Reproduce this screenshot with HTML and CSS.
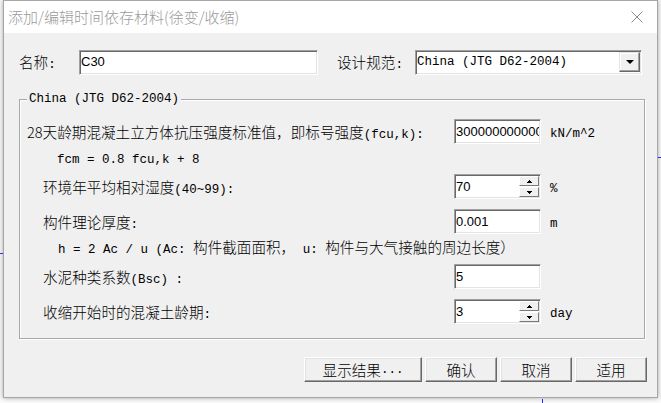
FILE: index.html
```html
<!DOCTYPE html>
<html lang="zh-CN">
<head>
<meta charset="utf-8">
<title>添加/编辑时间依存材料(徐变/收缩)</title>
<link rel="stylesheet" href="styles.css">
</head>
<body>
<div class="bg-line bl1"></div>
<div class="bg-line bl2"></div>
<div class="bg-line bl3"></div>
<div class="window">
  <div class="titlebar">
    <span class="title">添加/编辑时间依存材料(徐变/收缩)</span>
    <svg class="close" width="12" height="12" viewBox="0 0 12 12"><path d="M0.5 0.5 L11.5 11.5 M11.5 0.5 L0.5 11.5" stroke="#8c8c8c" stroke-width="1" fill="none"/></svg>
  </div>
  <div class="client">
    <div class="toprow">
      <span class="lbl-name">名称<span class="m">:</span></span>
      <div class="field name-field"><span class="val">C30</span></div>
      <span class="lbl-code">设计规范<span class="m">:</span></span>
      <div class="field combo"><span class="m combo-text">China (JTG D62-2004)</span><span class="dd"><span class="tri-down"></span></span></div>
    </div>
    <div class="group">
      <span class="legend m">China (JTG D62-2004)</span>
      <div class="row">
        <span class="lab first">28天龄期混凝土立方体抗压强度标准值，即标号强度<span class="m">(fcu,k):</span></span>
        <div class="field"><span class="val">300000000000</span></div>
        <span class="unit m">kN/m^2</span>
      </div>
      <div class="note fcm"><span class="m">fcm = 0.8 fcu,k + 8</span></div>
      <div class="row">
        <span class="lab">环境年平均相对湿度<span class="m">(40~99):</span></span>
        <div class="field spin"><span class="val">70</span><span class="spinbtns"><span class="sbtn"><svg width="5" height="3" viewBox="0 0 5 3"><path d="M2 0h1v1h1v1h1v1H0V2h1V1h1z" fill="#000"/></svg></span><span class="sbtn"><svg width="5" height="3" viewBox="0 0 5 3"><path d="M0 0h5v1H4v1H3v1H2V2H1V1H0z" fill="#000"/></svg></span></span></div>
        <span class="unit m">%</span>
      </div>
      <div class="row gap">
        <span class="lab">构件理论厚度<span class="m">:</span></span>
        <div class="field"><span class="val">0.001</span></div>
        <span class="unit m">m</span>
      </div>
      <div class="note hnote"><span class="note-text"><span class="m">h = 2 Ac / u (Ac: </span>构件截面面积，<span class="m"> u: </span>构件与大气接触的周边长度）</span></div>
      <div class="row">
        <span class="lab">水泥种类系数<span class="m">(Bsc) :</span></span>
        <div class="field"><span class="val">5</span></div>
        <span class="unit m"></span>
      </div>
      <div class="row gap">
        <span class="lab">收缩开始时的混凝土龄期<span class="m">:</span></span>
        <div class="field spin"><span class="val">3</span><span class="spinbtns"><span class="sbtn"><svg width="5" height="3" viewBox="0 0 5 3"><path d="M2 0h1v1h1v1h1v1H0V2h1V1h1z" fill="#000"/></svg></span><span class="sbtn"><svg width="5" height="3" viewBox="0 0 5 3"><path d="M0 0h5v1H4v1H3v1H2V2H1V1H0z" fill="#000"/></svg></span></span></div>
        <span class="unit m">day</span>
      </div>
    </div>
    <div class="buttons">
      <span class="btn wide">显示结果<span class="m">...</span></span>
      <span class="btn">确认</span>
      <span class="btn">取消</span>
      <span class="btn">适用</span>
    </div>
  </div>
</div>
</body>
</html>
```
FILE: styles.css
```css
* { box-sizing: border-box; }
html, body { margin: 0; padding: 0; }
body {
  width: 661px;
  height: 403px;
  overflow: hidden;
  position: relative;
  background: #fbfbfb;
  padding-left: 3px;
  font-family: "Noto Sans CJK SC", "Liberation Sans", sans-serif;
  font-size: 14.6px;
  font-weight: 300;
  line-height: 20px;
  color: #000;
}
.m {
  font-family: "Liberation Mono", "Noto Sans CJK SC", monospace;
  font-size: 12.5px;
  font-weight: 400;
}
.bg-line { position: absolute; background: #2a2aff; z-index: 2; }
.bl1 { left: 658px; top: 157px; width: 3px; height: 1px; }
.bl2 { left: 0; top: 253px; width: 3px; height: 1px; }
.bl3 { left: 542px; top: 399px; width: 1px; height: 4px; }

.window {
  width: 655px;
  height: 398px;
  border: 1px solid #a6a6a6;
  background: #f0f0f0;
  box-shadow: 0 0 5px rgba(0, 0, 0, 0.35);
  display: flex;
  flex-direction: column;
}
.titlebar {
  height: 32px;
  flex: none;
  background: #fff;
  display: flex;
  align-items: center;
  justify-content: space-between;
  padding: 0 14px 0 4px;
}
.title { color: #9a9a9a; font-size: 15px; }
.close { display: block; }

.client { flex: 1; padding-top: 17px; }

.toprow {
  display: flex;
  align-items: center;
  height: 24px;
  padding-left: 15px;
}
.lbl-name { width: 60px; padding-top: 2px; }
.lbl-code { width: 78px; margin-left: 19px; padding-top: 2px; }
.name-field { width: 239px; height: 24px; }
.combo { width: 227px; height: 24px; padding-right: 1px; }
.combo-text { white-space: nowrap; }

.field {
  background: #fff;
  border: 1px solid;
  border-color: #a0a0a0 #fff #fff #a0a0a0;
  box-shadow: inset 1px 1px 0 #696969, inset -1px -1px 0 #e3e3e3;
  display: flex;
  align-items: center;
  padding-left: 1px;
  padding-right: 1px;
  height: 25px;
}
.val {
  font-family: "Liberation Sans", sans-serif;
  font-size: 13px;
  font-weight: 400;
  white-space: nowrap;
  overflow: hidden;
  flex: 1;
  min-width: 0;
}
.dd {
  margin-left: auto;
  width: 21px;
  height: 20px;
  background: #f0f0f0;
  border: 1px solid;
  border-color: #e3e3e3 #696969 #696969 #e3e3e3;
  box-shadow: inset -1px -1px 0 #a0a0a0, inset 1px 1px 0 #fff;
  display: flex;
  align-items: center;
  justify-content: center;
}
.tri-down {
  width: 0;
  height: 0;
  border-left: 4px solid transparent;
  border-right: 4px solid transparent;
  border-top: 4px solid #000;
}

.group {
  position: relative;
  margin: 25px 12px 0 15px;
  height: 240px;
  border: 1px solid #a8a8a8;
  box-shadow: inset 1px 1px 0 #fff, 1px 1px 0 #fff;
  padding: 18px 0 15px 0;
}
.legend {
  position: absolute;
  top: -9px;
  left: 7px;
  padding: 0 2px;
  background: #f0f0f0;
  line-height: 16px;
  white-space: nowrap;
}
.row {
  display: grid;
  grid-template-columns: 434px 87px auto;
  align-items: center;
  height: 25px;
}
.row.gap { margin-top: 10px; }
.lab { padding-left: 23px; padding-top: 4px; white-space: nowrap; }
.lab.first { padding-left: 7px; }
.unit { margin-left: 9px; padding-top: 4px; }
.note {
  height: 30px;
  display: flex;
  align-items: center;
}
.note-text { white-space: pre; }
.note.fcm { padding-left: 37px; padding-top: 4px; }
.note.hnote { padding-left: 38px; padding-top: 1px; }

.spinbtns {
  margin-left: auto;
  width: 20px;
  display: flex;
  flex-direction: column;
  gap: 1px;
}
.sbtn {
  height: 10px;
  background: #f0f0f0;
  border: 1px solid;
  border-color: #fff #7a7a7a #7a7a7a #fff;
  display: flex;
  align-items: center;
  justify-content: center;
}
.sbtn svg { display: block; }

.buttons {
  display: flex;
  justify-content: flex-end;
  gap: 3px;
  margin-top: 18px;
  padding-right: 10px;
}
.btn {
  width: 72px;
  height: 25px;
  background: #f0f0f0;
  border: 1px solid;
  border-color: #fff #696969 #696969 #fff;
  box-shadow: inset -1px -1px 0 #a0a0a0, inset 1px 1px 0 #e3e3e3;
  display: flex;
  align-items: center;
  justify-content: center;
  white-space: nowrap;
}
.btn.wide { width: 118px; }
```
